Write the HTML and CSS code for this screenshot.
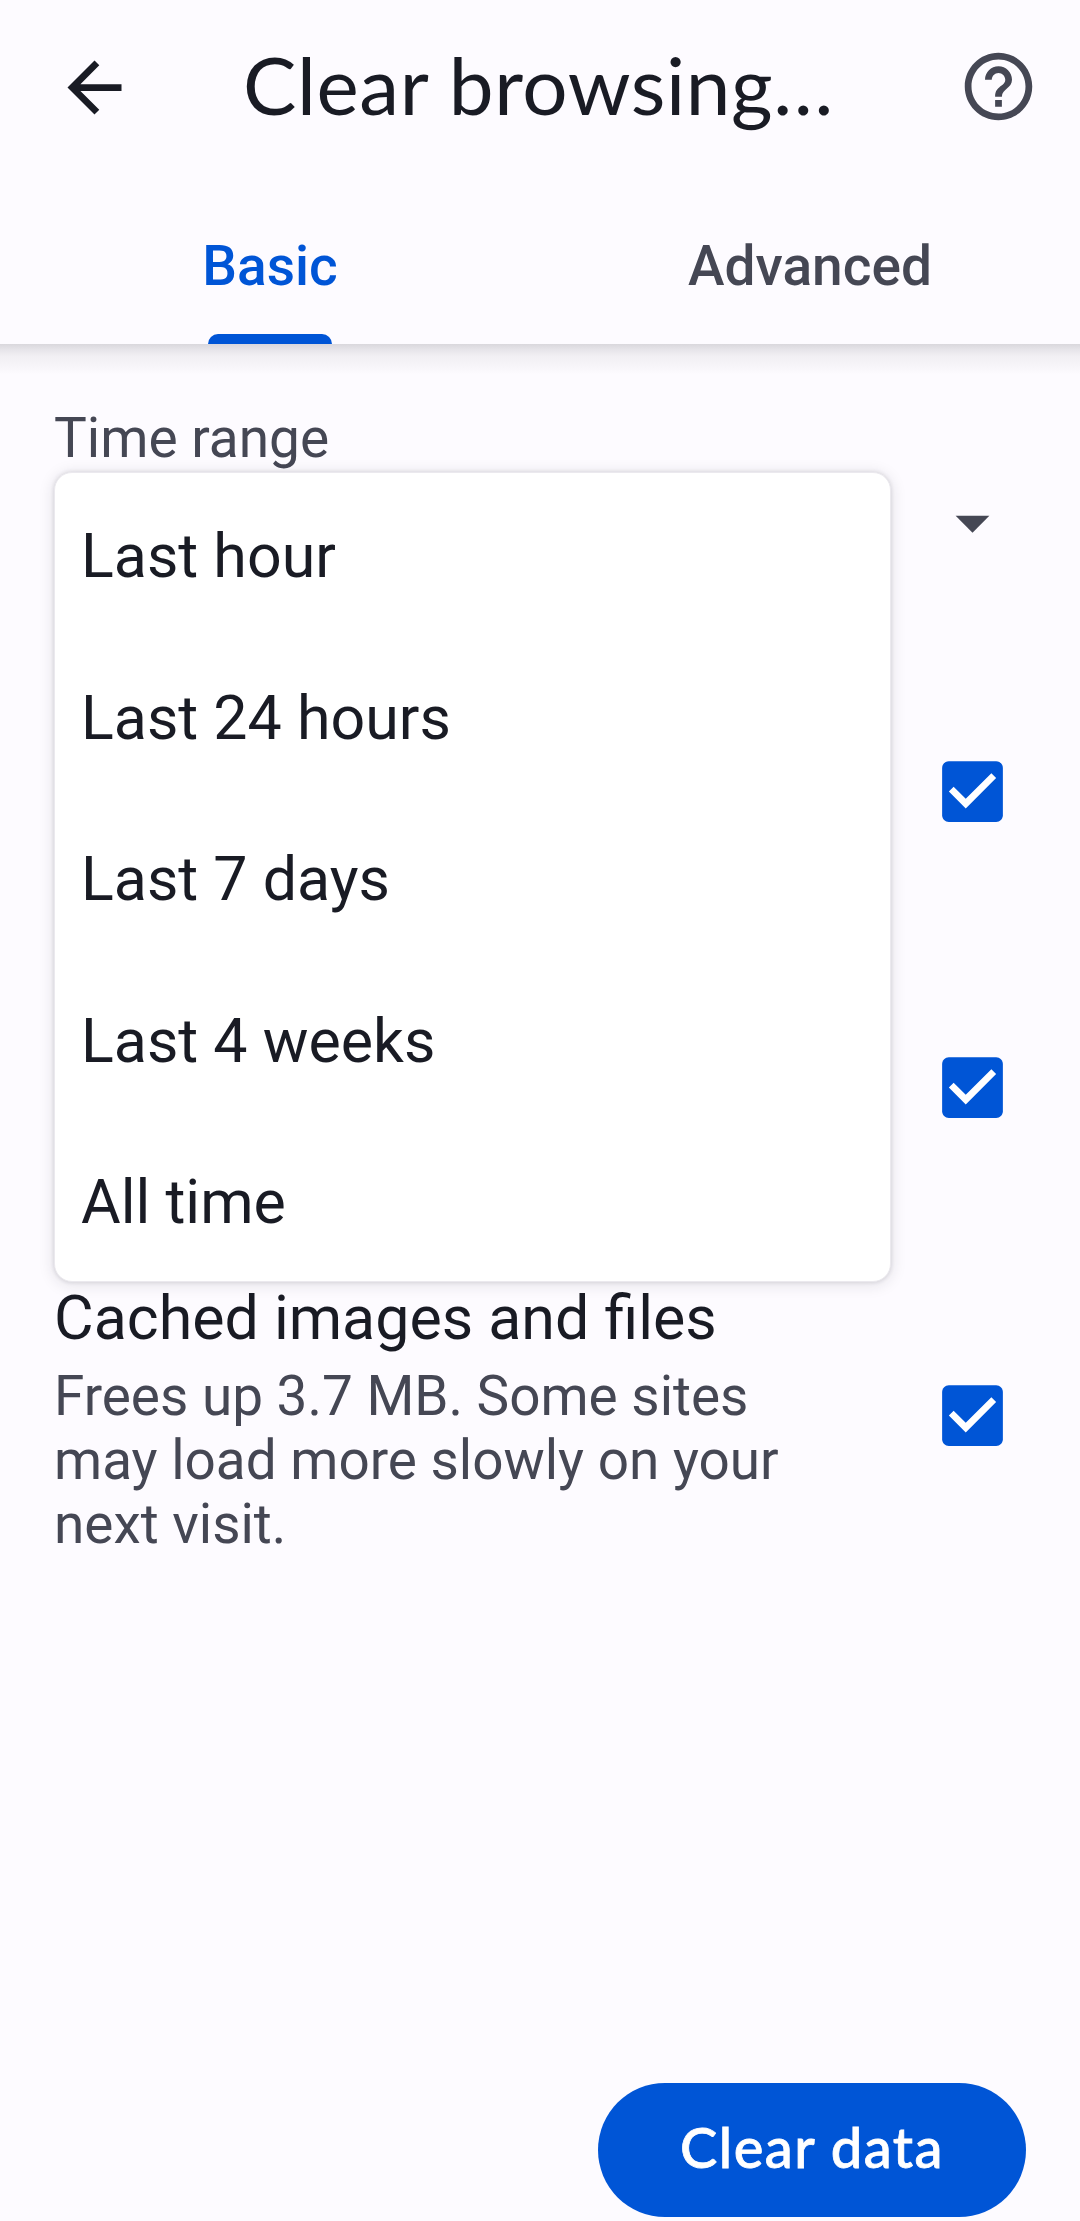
FILE: index.html
```html
<!DOCTYPE html>
<html lang="en">
<head>
<meta charset="utf-8">
<title>Clear browsing data</title>
<link rel="stylesheet" href="styles.css">
</head>
<body>
<header class="app-header">
  <div class="toolbar">
    <button class="icon-button back" aria-label="Back">
      <svg class="icon" viewBox="0 0 24 24"><path d="M20 11H7.83l5.59-5.59L12 4l-8 8 8 8 1.41-1.41L7.83 13H20z"/></svg>
    </button>
    <h1 class="title"><span class="title-text">Clear browsing…</span></h1>
    <button class="icon-button help" aria-label="Help">
      <svg class="icon" viewBox="0 0 24 24"><path d="M11 18h2v-2h-2v2zm1-16C6.48 2 2 6.48 2 12s4.480 10 10 10 10-4.480 10-10S17.520 2 12 2zm0 18c-4.410 0-8-3.590-8-8s3.590-8 8-8 8 3.590 8 8-3.590 8-8 8zm0-14c-2.210 0-4 1.790-4 4h2c0-1.100.9-2 2-2s2 .9 2 2c0 2-3 1.750-3 5h2c0-2.250 3-2.500 3-5 0-2.210-1.790-4-4-4z"/></svg>
    </button>
  </div>
  <nav class="tabs">
    <a class="tab tab-active">Basic</a>
    <a class="tab">Advanced</a>
  </nav>
</header>
<main class="content">
  <section class="range">
    <div class="range-field">
      <div class="label">Time range</div>
      <ul class="menu">
        <li class="option">Last hour</li>
        <li class="option">Last 24 hours</li>
        <li class="option">Last 7 days</li>
        <li class="option">Last 4 weeks</li>
        <li class="option">All time</li>
      </ul>
    </div>
    <svg class="icon arrow" viewBox="0 0 24 24"><path d="M7 10l5 5 5-5z"/></svg>
  </section>
  <section class="row row-history">
    <svg class="icon check" viewBox="0 0 24 24"><path d="M19 3H5c-1.110 0-2 .9-2 2v14c0 1.100.89 2 2 2h14c1.110 0 2-.9 2-2V5c0-1.100-.89-2-2-2z"/><path class="tick" d="M10 17l-5-5 1.410-1.410L10 14.170l7.590-7.590L19 8z"/></svg>
  </section>
  <section class="row row-cookies">
    <svg class="icon check" viewBox="0 0 24 24"><path d="M19 3H5c-1.110 0-2 .9-2 2v14c0 1.100.89 2 2 2h14c1.110 0 2-.9 2-2V5c0-1.100-.89-2-2-2z"/><path class="tick" d="M10 17l-5-5 1.410-1.410L10 14.170l7.590-7.590L19 8z"/></svg>
  </section>
  <section class="row row-cache">
    <div class="row-text">
      <h2 class="row-title">Cached images and files</h2>
      <p class="row-summary">Frees up 3.7 MB. Some sites<br>may load more slowly on your<br>next visit.</p>
    </div>
    <svg class="icon check" viewBox="0 0 24 24"><path d="M19 3H5c-1.110 0-2 .9-2 2v14c0 1.100.89 2 2 2h14c1.110 0 2-.9 2-2V5c0-1.100-.89-2-2-2z"/><path class="tick" d="M10 17l-5-5 1.410-1.410L10 14.170l7.590-7.590L19 8z"/></svg>
  </section>
</main>
<footer class="actions">
  <button class="clear">Clear data</button>
</footer>
</body>
</html>
```

FILE: styles.css
```css
* { box-sizing: border-box; margin: 0; padding: 0; }

body {
  display: flex;
  flex-direction: column;
  width: 1080px;
  height: 2221px;
  overflow: hidden;
  background: #fdfbff;
  color: #191b24;
  font-family: Roboto, sans-serif;
}

button { border: 0; background: none; font: inherit; }

.icon { display: block; flex: none; width: 81px; height: 81px; fill: #454754; }

.app-header { flex: none; height: 344px; }

.toolbar {
  display: flex;
  align-items: center;
  height: 174px;
  padding: 0 41px 0 54px;
}

.icon-button { flex: none; }
.back .icon { fill: #191b24; }
.help { margin-bottom: 1px; }

.title {
  flex: 1;
  padding: 0 0 7px 108px;
  font: 400 80px/100px Lato, sans-serif;
  letter-spacing: .6px;
  white-space: nowrap;
}

.tabs { display: flex; height: 170px; }

.tab {
  display: flex;
  flex: 1;
  flex-direction: column;
  align-items: center;
  padding-top: 60px;
  color: #454754;
  font-size: 55px;
  font-weight: 500;
  line-height: 65px;
}

.tab-active { color: #0055d6; }

.tab-active::after {
  content: "";
  width: 124px;
  height: 10px;
  margin-top: auto;
  border-radius: 10px 10px 0 0;
  background: #0055d6;
}

.content {
  flex: 1;
  padding: 62px 67.5px 0 54px;
  background: linear-gradient(#d9d7dc 0, #e5e3e8 5px, #f1eff3 12px, #f8f6fa 24px, #fdfbff 30px) no-repeat 0 0 / 100% 30px;
}

.range {
  display: flex;
  align-items: flex-start;
  justify-content: space-between;
  height: 345px;
}

.range-field { position: relative; width: 837px; }

.label { color: #454754; font-size: 55px; line-height: 65px; }

.menu {
  position: absolute;
  top: 66px;
  left: 0;
  z-index: 1;
  width: 837px;
  border: 1px solid #ebe9ee;
  border-radius: 18px;
  background: #fff;
  box-shadow: 0 0 4px rgba(30, 28, 45, .14), 0 2px 16px rgba(30, 28, 45, .13);
  list-style: none;
}

.option {
  height: 161.6px;
  padding: 4px 0 0 26px;
  font-size: 60.9px;
  line-height: 160px;
}

.arrow { margin: 76px 0 0; }

.row { display: flex; justify-content: flex-end; }

.row-history { height: 296px; }
.row-cookies { height: 235px; }
.row-cache { justify-content: space-between; align-items: flex-start; padding-top: 1px; height: 270px; }
.row-cache .check { margin-top: 92px; }

.row-title { font-size: 60.9px; font-weight: 400; line-height: 72px; }

.row-summary {
  margin-top: 9px;
  color: #454754;
  font-size: 54.9px;
  line-height: 64.2px;
}

.check { fill: #0055d6; }
.tick { fill: #fff; }

.actions { flex: none; display: flex; justify-content: flex-end; padding: 0 54px 4px 0; }

.clear {
  width: 428px;
  height: 134px;
  padding-bottom: 6px;
  border-radius: 67px;
  background: #0055d6;
  color: #fff;
  font: 500 56px/128px Lato, sans-serif;
  letter-spacing: 1.5px;
  -webkit-text-stroke: .8px #fff;
}
```
